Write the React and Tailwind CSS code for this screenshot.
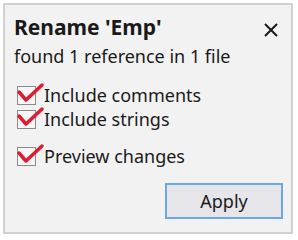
import React from "react";

function Check({ label, className = "" }) {
  return (
    <div className={`flex items-center ${className}`}>
      <div className="relative w-[19px] h-[19px] border border-[#8a8a8a] bg-[#f7f7f7] shrink-0">
        <svg className="absolute left-[-2px] top-[-6px]" width="30" height="26" viewBox="0 0 30 26">
          <path d="M3 11 L10 19 L26 4" fill="none" stroke="#e01b2f" strokeWidth="3.5" strokeLinecap="round" strokeLinejoin="round" />
        </svg>
      </div>
      <span className="ml-[8px] text-[18px] leading-[24px] text-[#1a1a1a]">{label}</span>
    </div>
  );
}

export default function App() {
  return (
    <div className="w-[298px] h-[240px] bg-white p-[3px]" style={{ fontFamily: '"Noto Sans", "Open Sans", sans-serif' }}>
      <div className="w-[290px] h-[231px] border-2 border-[#d0d0d0] bg-[#f2f2f2] flex flex-col">
        <div className="flex items-start justify-between pl-[9px] pr-[12px] pt-[7px]">
          <span className="text-[21px] leading-[31px] font-bold text-[#1a1a1a]">Rename 'Emp'</span>
          <svg className="mt-[10px]" width="16" height="16" viewBox="0 0 16 16">
            <path d="M2 2 L14 14 M14 2 L2 14" stroke="#1a1a1a" strokeWidth="2" fill="none" />
          </svg>
        </div>
        <div className="pl-[9px] text-[18px] leading-[26px] text-[#1a1a1a]">found 1 reference in 1 file</div>
        <div className="pl-[12px] mt-[14px] flex flex-col">
          <Check label="Include comments" />
          <Check label="Include strings" />
          <Check label="Preview changes" className="mt-[13px]" />
        </div>
        <div className="flex justify-end pr-[8px] mt-[15px]">
          <button className="w-[118px] h-[36px] border-2 border-[#6aa8e6] bg-[#e6e6ea] text-[18px] text-[#1a1a1a]">Apply</button>
        </div>
      </div>
    </div>
  );
}
